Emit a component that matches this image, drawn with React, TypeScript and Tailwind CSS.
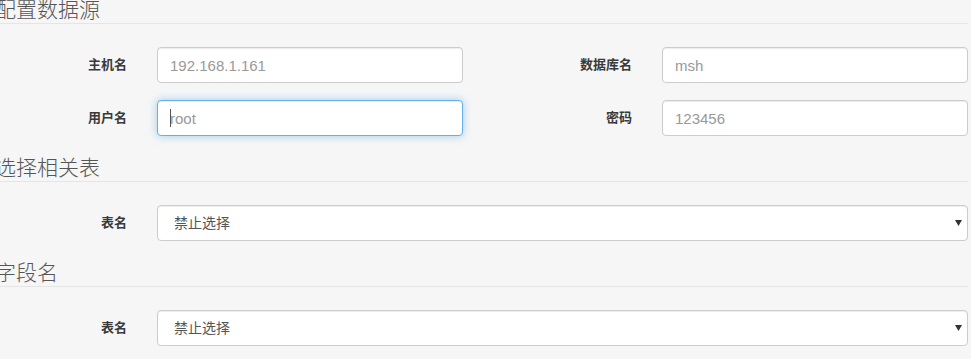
import React from "react";

const font = "font-['Liberation_Sans','Noto_Sans_CJK_SC',sans-serif]";

function Legend({ title, className = "" }: { title: string; className?: string }) {
  return (
    <div className={`w-[968px] border-b border-[#e5e5e5] pb-[3px] ${className}`}>
      <div className="-ml-[5px] text-[21px] font-light leading-[20px] text-[#555]">{title}</div>
    </div>
  );
}

function Label({ children }: { children: React.ReactNode }) {
  return (
    <div className="text-right text-[13px] font-bold text-[#3a3a3a]">{children}</div>
  );
}

function TextInput({ placeholder, focused }: { placeholder: string; focused?: boolean }) {
  return (
    <div className="relative">
      <input
        type="text"
        placeholder={placeholder}
        readOnly
        className={`h-[36px] w-full rounded-[4px] border bg-white px-[12px] text-[15px] text-[#555] outline-none placeholder:text-[#999] ${font} ${
          focused
            ? "border-[#66afe9] shadow-[inset_0_1px_1px_rgba(0,0,0,0.075),0_0_8px_rgba(102,175,233,0.6)]"
            : "border-[#ccc] shadow-[inset_0_1px_1px_rgba(0,0,0,0.075)]"
        }`}
      />
      {focused && (
        <span className="pointer-events-none absolute left-[13px] top-[9px] h-[18px] w-px bg-[#555]" />
      )}
    </div>
  );
}

function FakeSelect({ value }: { value: string }) {
  return (
    <div className="flex h-[36px] w-full items-center justify-between rounded-[4px] border border-[#ccc] bg-white pl-[16px] pr-[5px] text-[14px] text-[#555] shadow-[inset_0_1px_1px_rgba(0,0,0,0.075)]">
      <span>{value}</span>
      <svg width="7" height="6" viewBox="0 0 7 6">
        <path d="M0 0 H7 L3.5 6 Z" fill="#333" />
      </svg>
    </div>
  );
}

export default function App() {
  return (
    <div className={`flex h-[359px] w-full overflow-hidden bg-white ${font}`}>
      <div className="w-[971px] shrink-0 bg-[#f6f6f6]">
        {/* 配置数据源 */}
        <Legend title="配置数据源" />
        <div className="mt-[23px] grid grid-cols-[127px_306px_139px_306px] items-center gap-x-[30px] gap-y-[17px]">
          <Label>主机名</Label>
          <TextInput placeholder="192.168.1.161" />
          <Label>数据库名</Label>
          <TextInput placeholder="msh" />
          <Label>用户名</Label>
          <TextInput placeholder="root" focused />
          <Label>密码</Label>
          <TextInput placeholder="123456" />
        </div>

        {/* 选择相关表 */}
        <Legend title="选择相关表" className="mt-[22px]" />
        <div className="mt-[23px] grid grid-cols-[127px_811px] items-center gap-x-[30px]">
          <Label>表名</Label>
          <FakeSelect value="禁止选择" />
        </div>

        {/* 字段名 */}
        <Legend title="字段名" className="mt-[22px]" />
        <div className="mt-[23px] grid grid-cols-[127px_811px] items-center gap-x-[30px]">
          <Label>表名</Label>
          <FakeSelect value="禁止选择" />
        </div>
      </div>
      <div className="flex-1 bg-white" />
    </div>
  );
}
